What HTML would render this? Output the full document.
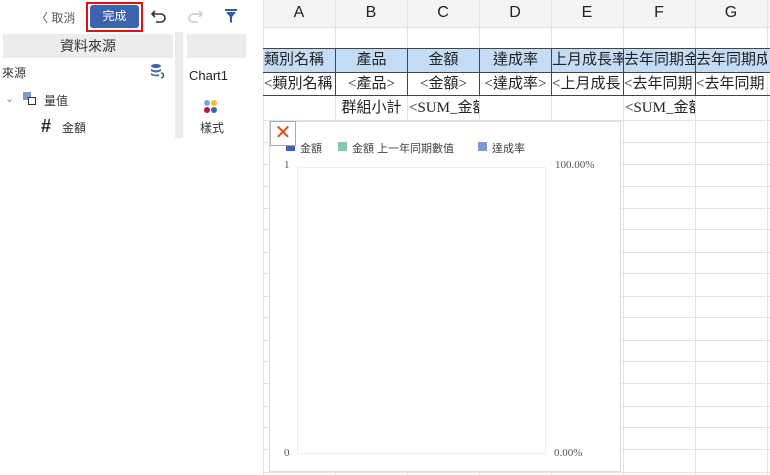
<!DOCTYPE html>
<html><head><meta charset="utf-8"><style>
*{box-sizing:border-box;margin:0;padding:0}
body{width:770px;height:475px;overflow:hidden;background:#fff;font-family:"Liberation Sans","Noto Sans CJK TC",sans-serif;position:relative}
.a{position:absolute}
.vl{position:absolute;width:1px;background:#e2e2e2}
.hl{position:absolute;height:1px;background:#e2e2e2}
.c{position:absolute;font-family:"Liberation Serif","Noto Sans CJK TC",serif;font-size:15px;white-space:nowrap;overflow:hidden;text-align:center;line-height:22px;color:#222}
</style></head><body>
<div class="a" style="left:36px;top:9px;font-size:12px;color:#555">〈 取消</div>
<div class="a" style="left:86px;top:2px;width:57px;height:30px;border:2px solid #e01010"></div>
<div class="a" style="left:90px;top:5px;width:49px;height:23px;background:#3d62b0;border-radius:3px;color:#fff;font-size:12px;text-align:center;line-height:23px">完成</div>
<svg class="a" style="left:150px;top:8px" width="18" height="16" viewBox="0 0 18 16"><path d="M5 3 L2 6 L5 9 M2 6 H11 A4 4 0 0 1 11 14 H6" fill="none" stroke="#333" stroke-width="1.6"/></svg>
<svg class="a" style="left:186px;top:8px" width="18" height="16" viewBox="0 0 18 16"><path d="M13 3 L16 6 L13 9 M16 6 H7 A4 4 0 0 0 7 14 H12" fill="none" stroke="#ccc" stroke-width="1.6"/></svg>
<svg class="a" style="left:224px;top:8px" width="14" height="16" viewBox="0 0 14 16"><path d="M1 1H13V3H1Z M2 4H12L8 9V15L6 14V9Z" fill="#2e5aa8"/></svg>
<div class="a" style="left:3px;top:34px;width:170px;height:24px;background:#ececec;text-align:center;font-size:14px;line-height:24px;color:#333">資料來源</div>
<div class="a" style="left:175px;top:32px;width:8px;height:106px;background:#ececec"></div>
<div class="a" style="left:187px;top:34px;width:59px;height:24px;background:#ececec"></div>
<div class="a" style="left:2px;top:64px;font-size:12px;color:#333">來源</div>
<svg class="a" style="left:150px;top:63px" width="16" height="16" viewBox="0 0 16 16"><ellipse cx="6" cy="3" rx="5" ry="2" fill="#3d62b0"/><path d="M1 6Q6 9 11 6V8Q6 11 1 8Z M1 10Q6 13 9 11V13Q6 14 1 12Z" fill="#3d62b0"/><path d="M11 10A2.5 2.5 0 1 1 11 15" fill="none" stroke="#333" stroke-width="1.2"/></svg>
<div class="a" style="left:5px;top:92px;font-size:11px;color:#888">⌄</div>
<div class="a" style="left:23px;top:92px;width:8px;height:8px;background:#7a9ad0"></div>
<div class="a" style="left:28px;top:97px;width:8px;height:8px;border:1.5px solid #333;background:#fff"></div>
<div class="a" style="left:44px;top:92px;font-size:12px;color:#333">量值</div>
<div class="a" style="left:41px;top:116px;font-size:18px;font-weight:bold;color:#222;line-height:20px">#</div>
<div class="a" style="left:62px;top:119px;font-size:12px;color:#333">金額</div>
<div class="a" style="left:189px;top:68px;font-size:13px;color:#222">Chart1</div>
<div class="a" style="left:204px;top:100px;width:6px;height:6px;border-radius:50%;background:#7fa6d6"></div>
<div class="a" style="left:211px;top:100px;width:6px;height:6px;border-radius:50%;background:#f0c020"></div>
<div class="a" style="left:204px;top:107px;width:6px;height:6px;border-radius:50%;background:#c8102e"></div>
<div class="a" style="left:211px;top:107px;width:6px;height:6px;border-radius:50%;background:#3d62b0"></div>
<div class="a" style="left:200px;top:119px;font-size:12px;color:#333">樣式</div>
<div class="a" style="left:263px;top:0;width:507px;height:27px;background:#f4f4f4"></div>
<div class="vl" style="left:263px;top:0;height:475px"></div>
<div class="vl" style="left:335px;top:0;height:475px"></div>
<div class="vl" style="left:407px;top:0;height:475px"></div>
<div class="vl" style="left:479px;top:0;height:475px"></div>
<div class="vl" style="left:551px;top:0;height:475px"></div>
<div class="vl" style="left:623px;top:0;height:475px"></div>
<div class="vl" style="left:695px;top:0;height:475px"></div>
<div class="vl" style="left:767px;top:0;height:475px"></div>
<div class="hl" style="left:263px;top:27px;width:507px"></div>
<div class="hl" style="left:263px;top:120px;width:507px"></div>
<div class="hl" style="left:263px;top:142px;width:507px"></div>
<div class="hl" style="left:263px;top:164px;width:507px"></div>
<div class="hl" style="left:263px;top:186px;width:507px"></div>
<div class="hl" style="left:263px;top:208px;width:507px"></div>
<div class="hl" style="left:263px;top:229px;width:507px"></div>
<div class="hl" style="left:263px;top:252px;width:507px"></div>
<div class="hl" style="left:263px;top:273px;width:507px"></div>
<div class="hl" style="left:263px;top:296px;width:507px"></div>
<div class="hl" style="left:263px;top:317px;width:507px"></div>
<div class="hl" style="left:263px;top:340px;width:507px"></div>
<div class="hl" style="left:263px;top:361px;width:507px"></div>
<div class="hl" style="left:263px;top:383px;width:507px"></div>
<div class="hl" style="left:263px;top:406px;width:507px"></div>
<div class="hl" style="left:263px;top:427px;width:507px"></div>
<div class="hl" style="left:263px;top:449px;width:507px"></div>
<div class="hl" style="left:263px;top:472px;width:507px"></div>
<div style="position:absolute;left:263px;top:4px;width:507px;font-size:16px;color:#222">
<span class="a" style="left:0;width:72px;text-align:center">A</span><span class="a" style="left:72px;width:72px;text-align:center">B</span><span class="a" style="left:144px;width:72px;text-align:center">C</span><span class="a" style="left:216px;width:72px;text-align:center">D</span><span class="a" style="left:288px;width:72px;text-align:center">E</span><span class="a" style="left:360px;width:72px;text-align:center">F</span><span class="a" style="left:432px;width:72px;text-align:center">G</span></div>
<div class="a" style="left:263px;top:48px;width:507px;height:24px;background:#c5dcf6"></div>
<div class="a" style="left:263px;top:48px;width:507px;height:48px;border-top:1px solid #444;border-bottom:1px solid #444"></div>
<div class="a" style="left:263px;top:72px;width:507px;height:1px;background:#444"></div>
<div class="a" style="left:335px;top:48px;width:1px;height:48px;background:#444"></div>
<div class="a" style="left:407px;top:48px;width:1px;height:48px;background:#444"></div>
<div class="a" style="left:479px;top:48px;width:1px;height:48px;background:#444"></div>
<div class="a" style="left:551px;top:48px;width:1px;height:48px;background:#444"></div>
<div class="a" style="left:623px;top:48px;width:1px;height:48px;background:#444"></div>
<div class="a" style="left:695px;top:48px;width:1px;height:48px;background:#444"></div>
<div class="c" style="left:264px;top:49px;width:71px;text-align:left">類別名稱</div>
<div class="c" style="left:336px;top:49px;width:71px">產品</div>
<div class="c" style="left:408px;top:49px;width:71px">金額</div>
<div class="c" style="left:480px;top:49px;width:71px">達成率</div>
<div class="c" style="left:552px;top:49px;width:71px;text-align:left">上月成長率</div>
<div class="c" style="left:624px;top:49px;width:71px;text-align:left">去年同期金</div>
<div class="c" style="left:696px;top:49px;width:71px;text-align:left">去年同期成</div>
<div class="c" style="left:264px;top:73px;width:71px;text-align:left">&lt;類別名稱</div>
<div class="c" style="left:336px;top:73px;width:71px">&lt;產品&gt;</div>
<div class="c" style="left:408px;top:73px;width:71px">&lt;金額&gt;</div>
<div class="c" style="left:480px;top:73px;width:71px">&lt;達成率&gt;</div>
<div class="c" style="left:552px;top:73px;width:71px;text-align:left">&lt;上月成長</div>
<div class="c" style="left:624px;top:73px;width:71px;text-align:left">&lt;去年同期</div>
<div class="c" style="left:696px;top:73px;width:71px;text-align:left">&lt;去年同期</div>
<div class="c" style="left:336px;top:97px;width:71px">群組小計</div>
<div class="c" style="left:409px;top:97px;width:70px;text-align:left">&lt;SUM_金額</div>
<div class="c" style="left:625px;top:97px;width:70px;text-align:left">&lt;SUM_金額</div>
<div class="a" style="left:269px;top:121px;width:352px;height:351px;background:#fff;border:1px solid #ddd"></div>
<div class="a" style="left:270px;top:121px;width:26px;height:25px;border:1px solid #aaa;background:#fff;color:#e8470c;font-size:20px;line-height:23px;text-align:center">✕</div>
<div class="a" style="left:286px;top:146px;width:9px;height:5px;background:#3d62b0"></div>
<div class="a" style="left:300px;top:140px;font-size:11px;color:#444">金額</div>
<div class="a" style="left:338px;top:142px;width:9px;height:9px;background:#86c9a8"></div>
<div class="a" style="left:352px;top:140px;font-size:11px;color:#444">金額 上一年同期數值</div>
<div class="a" style="left:478px;top:142px;width:9px;height:9px;background:#7a9ad0"></div>
<div class="a" style="left:492px;top:140px;font-size:11px;color:#444">達成率</div>
<div class="a" style="left:297px;top:167px;width:249px;height:287px;border:1px solid #eee"></div>
<div class="a" style="left:284px;top:159px;font-family:'Liberation Serif',serif;font-size:11px;color:#555">1</div>
<div class="a" style="left:284px;top:447px;font-family:'Liberation Serif',serif;font-size:11px;color:#555">0</div>
<div class="a" style="left:555px;top:159px;font-family:'Liberation Serif',serif;font-size:11px;color:#555">100.00%</div>
<div class="a" style="left:554px;top:447px;font-family:'Liberation Serif',serif;font-size:11px;color:#555">0.00%</div>
</body></html>
